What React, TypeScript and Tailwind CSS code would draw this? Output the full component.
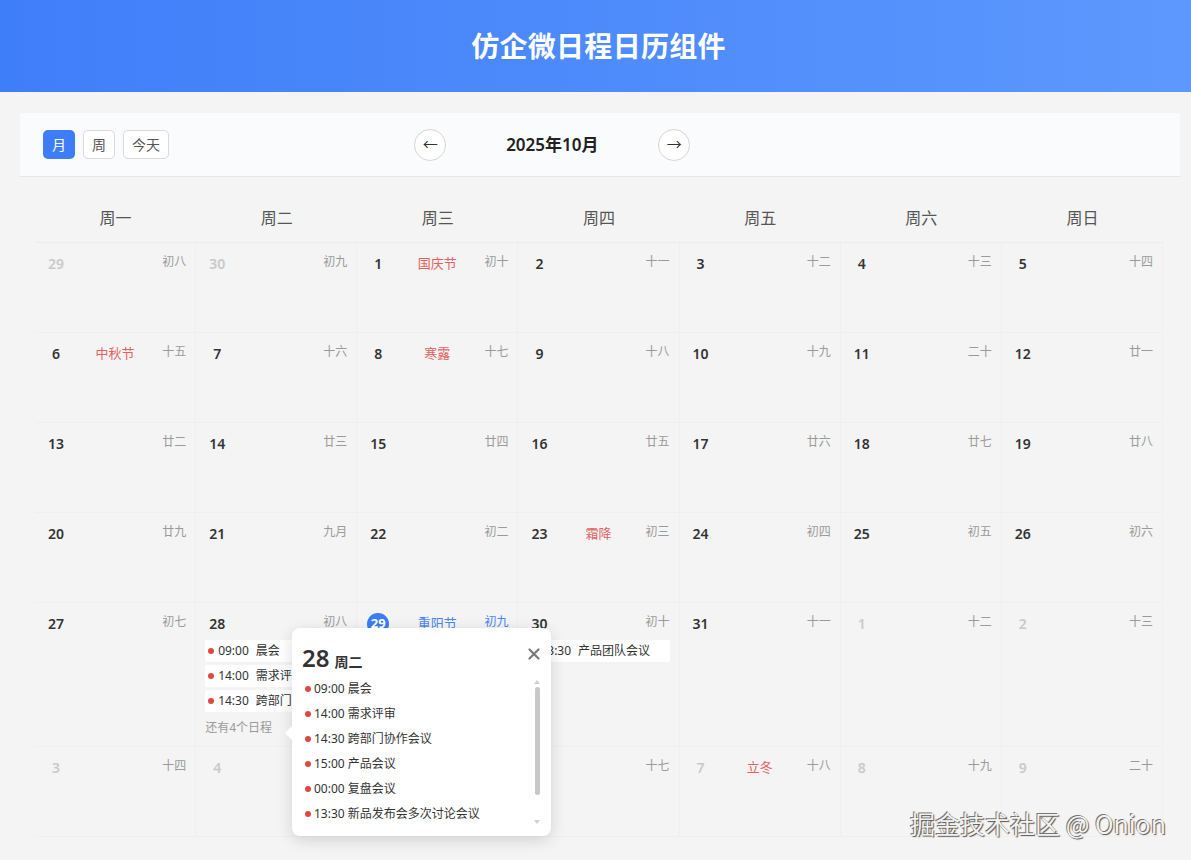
import React from 'react';

type Cell = {
  d: number;
  cur: boolean;
  lunar: string;
  hol?: string;
  today?: boolean;
  events?: { time: string; title: string }[];
  more?: number;
};

const weekDays = ['周一', '周二', '周三', '周四', '周五', '周六', '周日'];

const weeks: Cell[][] = [
  [
    { d: 29, cur: false, lunar: '初八' },
    { d: 30, cur: false, lunar: '初九' },
    { d: 1, cur: true, lunar: '初十', hol: '国庆节' },
    { d: 2, cur: true, lunar: '十一' },
    { d: 3, cur: true, lunar: '十二' },
    { d: 4, cur: true, lunar: '十三' },
    { d: 5, cur: true, lunar: '十四' },
  ],
  [
    { d: 6, cur: true, lunar: '十五', hol: '中秋节' },
    { d: 7, cur: true, lunar: '十六' },
    { d: 8, cur: true, lunar: '十七', hol: '寒露' },
    { d: 9, cur: true, lunar: '十八' },
    { d: 10, cur: true, lunar: '十九' },
    { d: 11, cur: true, lunar: '二十' },
    { d: 12, cur: true, lunar: '廿一' },
  ],
  [
    { d: 13, cur: true, lunar: '廿二' },
    { d: 14, cur: true, lunar: '廿三' },
    { d: 15, cur: true, lunar: '廿四' },
    { d: 16, cur: true, lunar: '廿五' },
    { d: 17, cur: true, lunar: '廿六' },
    { d: 18, cur: true, lunar: '廿七' },
    { d: 19, cur: true, lunar: '廿八' },
  ],
  [
    { d: 20, cur: true, lunar: '廿九' },
    { d: 21, cur: true, lunar: '九月' },
    { d: 22, cur: true, lunar: '初二' },
    { d: 23, cur: true, lunar: '初三', hol: '霜降' },
    { d: 24, cur: true, lunar: '初四' },
    { d: 25, cur: true, lunar: '初五' },
    { d: 26, cur: true, lunar: '初六' },
  ],
  [
    { d: 27, cur: true, lunar: '初七' },
    {
      d: 28,
      cur: true,
      lunar: '初八',
      events: [
        { time: '09:00', title: '晨会' },
        { time: '14:00', title: '需求评审' },
        { time: '14:30', title: '跨部门协作会议' },
      ],
      more: 4,
    },
    { d: 29, cur: true, lunar: '初九', hol: '重阳节', today: true },
    { d: 30, cur: true, lunar: '初十', events: [{ time: '13:30', title: '产品团队会议' }] },
    { d: 31, cur: true, lunar: '十一' },
    { d: 1, cur: false, lunar: '十二' },
    { d: 2, cur: false, lunar: '十三' },
  ],
  [
    { d: 3, cur: false, lunar: '十四' },
    { d: 4, cur: false, lunar: '十五' },
    { d: 5, cur: false, lunar: '十六' },
    { d: 6, cur: false, lunar: '十七' },
    { d: 7, cur: false, lunar: '十八', hol: '立冬' },
    { d: 8, cur: false, lunar: '十九' },
    { d: 9, cur: false, lunar: '二十' },
  ],
];

const popEvents = [
  { time: '09:00', title: '晨会' },
  { time: '14:00', title: '需求评审' },
  { time: '14:30', title: '跨部门协作会议' },
  { time: '15:00', title: '产品会议' },
  { time: '00:00', title: '复盘会议' },
  { time: '13:30', title: '新品发布会多次讨论会议' },
];

function DayCell({ c }: { c: Cell }) {
  return (
    <div className="min-h-[90px] border-r border-b border-[#efefef] px-[9px] pt-[10px] pb-[10px] flex flex-col">
      <div className="grid grid-cols-[1fr_auto_1fr] items-start h-[22px]">
        <div className="flex">
          {c.today ? (
            <span className="w-[22px] h-[22px] rounded-full bg-[#3b7cf6] text-white text-[13px] font-bold flex items-center justify-center ml-px">
              {c.d}
            </span>
          ) : (
            <span
              className={
                'w-[22px] h-[22px] ml-px text-center text-[14px] font-semibold leading-[22px] ' +
                (c.cur ? 'text-[#333]' : 'text-[#c9c9c9]')
              }
            >
              {c.d}
            </span>
          )}
        </div>
        <span
          className={
            'text-[13px] leading-[20px] ' + (c.today ? 'text-[#4a86f0]' : 'text-[#e2625f]')
          }
        >
          {c.hol ?? ''}
        </span>
        <span
          className={
            'justify-self-end text-[12px] leading-[18px] ' +
            (c.today ? 'text-[#4a86f0]' : 'text-[#9a9a9a]')
          }
        >
          {c.lunar}
        </span>
      </div>
      {c.events && (
        <div className="mt-[5px] flex flex-col gap-[3px]">
          {c.events.map((e) => (
            <div
              key={e.time + e.title}
              className="h-[22px] bg-white rounded-[2px] flex items-center pl-[3px] text-[12px] text-[#333] whitespace-nowrap overflow-hidden"
            >
              <span className="w-[6px] h-[6px] rounded-full bg-[#e0473f] mr-[4px] shrink-0" />
              <span>{e.time}</span>
              <span className="ml-[7px]">{e.title}</span>
            </div>
          ))}
        </div>
      )}
      {c.more && (
        <div className="mt-[8px] text-[12px] text-[#999] leading-[16px]">还有{c.more}个日程</div>
      )}
    </div>
  );
}

export default function App() {
  return (
    <div className="relative h-[860px] overflow-hidden bg-[#f4f4f4] font-['Noto_Sans','Noto_Sans_CJK_SC',sans-serif]">
      <header className="h-[92px] bg-gradient-to-r from-[#3f7ef9] to-[#5c98fd] flex items-center justify-center">
        <h1 className="text-[28px] font-bold text-white tracking-[0.3px] ml-[6px]">仿企微日程日历组件</h1>
      </header>

      <div className="ml-[20px] w-[1160px] mt-[21px] h-[64px] bg-[#fafbfd] border-b border-[#e6e6e6] flex items-center px-[23px]">
        <div className="flex-1 flex gap-[8px]">
          <button className="w-[32px] h-[29px] rounded-[5px] bg-[#3d7ef7] text-white text-[14px]">月</button>
          <button className="w-[32px] h-[29px] rounded-[5px] bg-white border border-[#d9d9d9] text-[#555] text-[14px]">
            周
          </button>
          <button className="w-[46px] h-[29px] rounded-[5px] bg-white border border-[#d9d9d9] text-[#555] text-[14px]">
            今天
          </button>
        </div>
        <div className="flex-1 flex items-center">
          <button className="w-[32px] h-[32px] rounded-full bg-white border border-[#d6d6d6] text-[#333] text-[15px] flex items-center justify-center">
            ←
          </button>
          <div className="w-[212px] text-center text-[17px] font-semibold text-[#222]">2025年10月</div>
          <button className="w-[32px] h-[32px] rounded-full bg-white border border-[#d6d6d6] text-[#333] text-[15px] flex items-center justify-center">
            →
          </button>
        </div>
        <div className="flex-1" />
      </div>

      <div className="ml-[35px] w-[1128px] mt-[16px]">
        <div className="grid grid-cols-7 h-[50px] border-b border-[#ececec]">
          {weekDays.map((w) => (
            <div key={w} className="flex items-center justify-center pt-[1px] text-[16px] text-[#555]">
              {w}
            </div>
          ))}
        </div>
        {weeks.map((row, i) => (
          <div key={i} className="grid grid-cols-7">
            {row.map((c, j) => (
              <DayCell key={j} c={c} />
            ))}
          </div>
        ))}
      </div>

      <div className="absolute left-[292px] top-[628px] w-[259px] h-[208px] bg-white rounded-[8px] shadow-[0_4px_16px_rgba(0,0,0,0.14)]">
        <div className="absolute left-[-5px] top-[100px] w-[10px] h-[10px] bg-white rotate-45" />
        <div className="relative flex items-center justify-between pl-[10px] pr-[11px] pt-[16px]">
          <div className="flex items-baseline gap-[5px]">
            <span className="text-[24px] font-semibold text-[#333] leading-[28px]">28</span>
            <span className="text-[14px] font-bold text-[#333]">周二</span>
          </div>
          <svg width="12" height="12" viewBox="0 0 12 12" className="-mt-[9px]">
            <path d="M1.5 1.5L10.5 10.5M10.5 1.5L1.5 10.5" stroke="#7a7a7a" strokeWidth="2.2" strokeLinecap="round" />
          </svg>
        </div>
        <div className="relative flex mt-[4px]">
          <div className="flex-1 flex flex-col pl-[13px]">
            {popEvents.map((e) => (
              <div key={e.time + e.title} className="h-[25px] flex items-center text-[12px] text-[#333]">
                <span className="w-[6px] h-[6px] rounded-full bg-[#e0473f] mr-[3px]" />
                <span>{e.time}</span>
                <span className="ml-[3px]">{e.title}</span>
              </div>
            ))}
          </div>
          <div className="w-[8px] mr-[10px] flex flex-col items-center pt-[4px]">
            <svg width="6" height="4" viewBox="0 0 6 4">
              <path d="M0 4L3 0L6 4Z" fill="#d0d0d0" />
            </svg>
            <div className="w-[5px] h-[108px] mt-[3px] rounded-full bg-[#c8c8c8]" />
            <div className="flex-1" />
            <svg width="6" height="4" viewBox="0 0 6 4" className="mb-[2px]">
              <path d="M0 0L6 0L3 4Z" fill="#d0d0d0" />
            </svg>
          </div>
        </div>
      </div>

      <div className="absolute right-[25px] bottom-[22px] text-[25px] leading-[30px] text-[#f2f2f2] [text-shadow:1px_1px_1px_#555,-1px_-1px_0_#777] font-['Noto_Sans_CJK_SC',sans-serif]">
        掘金技术社区 @ Onion
      </div>
    </div>
  );
}
